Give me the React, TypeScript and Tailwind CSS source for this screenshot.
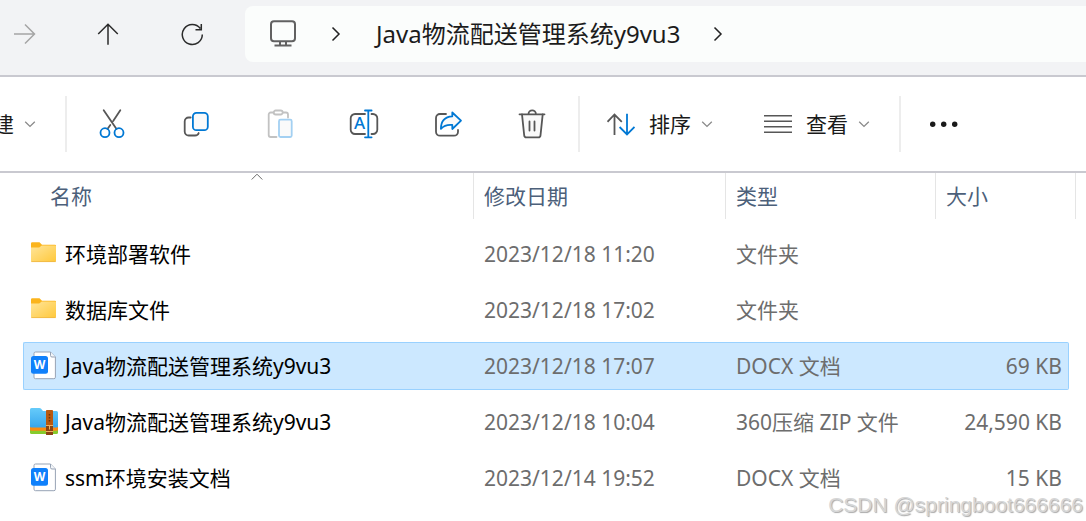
import React from 'react';

type FileKind = 'folder' | 'docx' | 'zip';

interface FileItem {
  name: string;
  kind: FileKind;
  date: string;
  type: string;
  size?: string;
  selected?: boolean;
}

const FILES: FileItem[] = [
  { name: '环境部署软件', kind: 'folder', date: '2023/12/18 11:20', type: '文件夹' },
  { name: '数据库文件', kind: 'folder', date: '2023/12/18 17:02', type: '文件夹' },
  { name: 'Java物流配送管理系统y9vu3', kind: 'docx', date: '2023/12/18 17:07', type: 'DOCX 文档', size: '69 KB', selected: true },
  { name: 'Java物流配送管理系统y9vu3', kind: 'zip', date: '2023/12/18 10:04', type: '360压缩 ZIP 文件', size: '24,590 KB' },
  { name: 'ssm环境安装文档', kind: 'docx', date: '2023/12/14 19:52', type: 'DOCX 文档', size: '15 KB' },
];

const FolderIcon = () => (
  <svg width="30" height="30" viewBox="0 0 30 30" className="shrink-0">
    <defs>
      <linearGradient id="folder-front" x1="0" y1="0" x2="1" y2="1">
        <stop offset="0" stopColor="#ffe59a" />
        <stop offset="1" stopColor="#ffc83a" />
      </linearGradient>
    </defs>
    <path d="M2 4.5a1.3 1.3 0 0 1 1.3-1.3H10.5l2.500 2.500H26a1 1 0 0 1 1 1V12H2z" fill="#fbb41c" />
    <path d="M2 8.600h8.200l2.600-2H26a1 1 0 0 1 1 1V21.700a1.300 1.300 0 0 1-1.300 1.300H3.300A1.300 1.300 0 0 1 2 21.700z" fill="url(#folder-front)" />
    <path d="M2.300 22.600H26.700" stroke="#eeb544" strokeWidth="0.8" />
  </svg>
);

const DocxIcon = () => (
  <svg width="30" height="30" viewBox="0 0 30 30" className="shrink-0">
    <path d="M6.500 1H21.500L26.400 6V26.200a1.500 1.500 0 0 1-1.500 1.500H6.500A1.500 1.500 0 0 1 5 26.200V2.500A1.500 1.500 0 0 1 6.500 1z" fill="#fff" stroke="#97a3b5" />
    <path d="M21.500 1V4.500a1.500 1.500 0 0 0 1.500 1.500H26.400" fill="#f4f6f9" stroke="#97a3b5" />
    <rect x="2" y="5" width="17" height="17.700" rx="2.500" fill="#0f80fb" />
    <text x="10.500" y="18" textAnchor="middle" fontSize="12" fontWeight="700" fill="#fff">W</text>
  </svg>
);

const ZipIcon = () => (
  <svg width="30" height="30" viewBox="0 0 30 30" className="shrink-0">
    <defs>
      <linearGradient id="zip-front" x1="0" y1="0" x2="0" y2="1">
        <stop offset="0" stopColor="#66cbfa" />
        <stop offset="1" stopColor="#3aa8ee" />
      </linearGradient>
    </defs>
    <rect x="1" y="14" width="28" height="13" rx="1.500" fill="#86cb2c" />
    <rect x="1" y="11" width="28" height="12.800" rx="1.500" fill="#fb8b13" />
    <path d="M1 2.500A1.500 1.500 0 0 1 2.500 1H10.500a2 2 0 0 1 1.400.6L14 4H27.500A1.500 1.500 0 0 1 29 5.500V20H1z" fill="url(#zip-front)" />
    <path d="M1 18.500h28v.500a1.500 1.500 0 0 1-1.500 1.500h-25A1.500 1.500 0 0 1 1 19z" fill="#3aa8ee" />
    <rect x="17" y="3" width="7" height="25" rx="0.800" fill="#b9590f" />
    <path d="M20.500 7v9" stroke="#6f3407" strokeWidth="1.500" strokeDasharray="1.500 1.500" />
    <rect x="17" y="18" width="7" height="10" rx="0.800" fill="#8b4410" />
    <path d="M16.800 18.500h7.400M16.800 24.500h7.400M20.500 18.500v4" stroke="#f0b060" strokeWidth="1" />
  </svg>
);

const FILE_ICONS: Record<FileKind, React.FC> = {
  folder: FolderIcon,
  docx: DocxIcon,
  zip: ZipIcon,
};

const ChevronDown = () => (
  <svg width="12" height="12" viewBox="0 0 12 12" fill="none" stroke="#8a8a8a" strokeWidth="1.300">
    <path d="M1.200 3.800L6 8.400l4.800-4.600" />
  </svg>
);

const ChevronRight = () => (
  <svg width="12" height="16" viewBox="0 0 12 16" fill="none" stroke="#222" strokeWidth="1.500">
    <path d="M2.500 1.500L9 8l-6.500 6.500" />
  </svg>
);

const NavButton: React.FC<{ label: string; disabled?: boolean; children: React.ReactNode }> = ({ label, disabled, children }) => (
  <button type="button" aria-label={label} disabled={disabled} className="flex w-[84px] shrink-0 items-center justify-center">
    {children}
  </button>
);

const ToolButton: React.FC<{ label: string; disabled?: boolean; children: React.ReactNode }> = ({ label, disabled, children }) => (
  <button type="button" aria-label={label} disabled={disabled} className="flex h-14 w-[84px] shrink-0 items-center justify-center">
    <svg width="32" height="32" viewBox="0 0 32 32" fill="none" stroke="#575757" strokeWidth="1.800" strokeLinecap="round" strokeLinejoin="round">
      {children}
    </svg>
  </button>
);

const Divider = () => <div className="h-14 w-0.5 shrink-0 bg-[#ededed]" />;

const App: React.FC = () => {
  return (
    <div className="relative min-h-screen overflow-hidden bg-white font-['Noto_Sans','Noto_Sans_CJK_SC',sans-serif] text-[21px] leading-7">
      {/* Navigation bar */}
      <nav className="flex border-b-2 border-[#c9c9d0] bg-[#f2f3f5] pt-1.5 pb-[13px]">
        <div className="-ml-[18px] flex">
          <NavButton label="前进" disabled>
            <svg width="24" height="24" viewBox="0 0 24 24" fill="none" stroke="#a5a5a5" strokeWidth="1.500">
              <path d="M2 12H22.500M13 2.500L22.500 12L13 21.500" />
            </svg>
          </NavButton>
          <NavButton label="上移">
            <svg width="24" height="24" viewBox="0 0 24 24" fill="none" stroke="#2b2b2b" strokeWidth="1.500">
              <path d="M12 22.800V2.500M2.200 12L12 2.300L21.800 12" />
            </svg>
          </NavButton>
          <NavButton label="刷新">
            <svg width="24" height="24" viewBox="0 0 24 24" fill="none" stroke="#2b2b2b" strokeWidth="1.500">
              <path d="M22.300 12.500A10 10 0 1 1 20.300 6.500M21.300 2v5.700H15.500" />
            </svg>
          </NavButton>
        </div>
        <div className="ml-[11px] flex h-14 flex-1 items-center rounded-l-lg bg-[#fbfdfc] pl-6">
          <svg width="28" height="28" viewBox="0 0 28 28" fill="none" stroke="#616161" strokeWidth="2" className="shrink-0">
            <rect x="2" y="1.300" width="24" height="20" rx="3" />
            <path d="M11 21.500v4M17 21.500v4M5.500 25.500h17" />
          </svg>
          <button type="button" aria-label="展开" className="ml-[33px]"><ChevronRight /></button>
          <a href="#" className="ml-[34px] text-2xl whitespace-nowrap text-[#1c1c1c]">Java物流配送管理系统y9vu3</a>
          <button type="button" aria-label="展开子文件夹" className="ml-8"><ChevronRight /></button>
        </div>
      </nav>

      {/* Command bar */}
      <div className="flex items-center border-b-2 border-[#c9c9d0] py-[19px] text-[#1a1a1a]">
        <button type="button" className="-ml-[7px] flex w-[72px] shrink-0 items-center gap-2.5">
          建
          <ChevronDown />
        </button>
        <Divider />
        <div className="mx-[3px] flex">
          <ToolButton label="剪切">
            <path d="M7.700 2.300L20.500 21M24.300 2.300L17.200 13M14.300 17L11.500 21" />
            <circle cx="9" cy="24.700" r="4.500" stroke="#0078d4" />
            <circle cx="23" cy="24.700" r="4.500" stroke="#0078d4" />
          </ToolButton>
          <ToolButton label="复制">
            <path d="M10.700 9.500H8.700a4 4 0 0 0-4 4V23.500a4 4 0 0 0 4 4H15Q18 27.500 18.700 25" />
            <rect x="12.900" y="4.800" width="14.900" height="17.400" rx="3.500" fill="#fafafa" stroke="#0078d4" />
          </ToolButton>
          <ToolButton label="粘贴" disabled>
            <path d="M9.500 4.500H6.700a2 2 0 0 0-2 2V27a2 2 0 0 0 2 2H12.500M18.900 4.500H22a2 2 0 0 1 2 2V9.500" stroke="#c2c2c2" />
            <rect x="9.700" y="2.500" width="9" height="4" rx="2" stroke="#c2c2c2" />
            <rect x="15" y="11.700" width="12.700" height="17.300" rx="1.500" fill="#fafafa" stroke="#a3d0f2" />
          </ToolButton>
          <ToolButton label="重命名">
            <path d="M17 6H7a4.300 4.300 0 0 0-4.300 4.300V21.700A4.300 4.300 0 0 0 7 26H17M23.500 6H25a4.300 4.300 0 0 1 4.300 4.300V21.700A4.300 4.300 0 0 1 25 26H23.500" />
            <path d="M20.300 2.500V29.300M17 2.500h6.600M17 29.300h6.600" stroke="#0078d4" />
            <text x="11.500" y="21" textAnchor="middle" fontSize="17" fill="#0078d4" stroke="none" fontWeight="500">A</text>
          </ToolButton>
          <ToolButton label="共享">
            <path d="M14 6H8a4 4 0 0 0-4 4V23.700a4 4 0 0 0 4 4H22a4 4 0 0 0 4-4V22" />
            <path d="M20.300 4.500L29 12.700L20.300 21V17C15 16.500 11.500 18 8.900 20.900C8.900 13.500 12.500 8.700 20.300 8.300z" fill="#fafafa" stroke="#0078d4" />
          </ToolButton>
          <ToolButton label="删除">
            <path d="M6 6.300L8.200 27.300a2.200 2.200 0 0 0 2.200 2H22.300a2.200 2.200 0 0 0 2.200-2L26.700 6.300" fill="#fafafa" />
            <path d="M3.500 6.300H28.500M12.500 6a3.700 3.700 0 0 1 7.400 0M13.500 13.500V22.500M18.500 13.500V22.500" />
          </ToolButton>
        </div>
        <div className="ml-px"><Divider /></div>
        <button type="button" className="ml-[27px] flex shrink-0 items-center">
          <svg width="28" height="28" viewBox="0 0 28 28" fill="none" strokeWidth="1.800">
            <path d="M7.500 25V4.500M.5 11.800L7.500 4.500L14.800 11.800" stroke="#575757" />
            <path d="M20 3.800V24.500M12.600 17L20 24.500L27.500 17" stroke="#0078d4" />
          </svg>
          <span className="ml-3.5 mr-2.5">排序</span>
          <ChevronDown />
        </button>
        <button type="button" className="ml-[51px] flex shrink-0 items-center">
          <svg width="28" height="28" viewBox="0 0 28 28" fill="none" stroke="#575757" strokeWidth="1.600">
            <path d="M0 5.700H28M0 11.200H28M0 16.700H28M0 22.200H28" />
          </svg>
          <span className="ml-3.5 mr-2.5">查看</span>
          <ChevronDown />
        </button>
        <div className="ml-[29px]"><Divider /></div>
        <button type="button" aria-label="查看更多" className="ml-7 shrink-0">
          <svg width="30" height="8" viewBox="0 0 30 8" fill="#1a1a1a">
            <circle cx="3.700" cy="4.300" r="2.700" />
            <circle cx="14.700" cy="4.300" r="2.700" />
            <circle cx="25.700" cy="4.300" r="2.700" />
          </svg>
        </button>
      </div>

      {/* File list */}
      <div className="pr-2.5 pl-[23px]">
        <table className="w-full table-fixed border-collapse text-left text-[#6d6d6d]">
          <colgroup>
            <col />
            <col className="w-[252px]" />
            <col className="w-[210px]" />
            <col className="w-[140px]" />
          </colgroup>
          <thead className="text-[#4c607a]">
            <tr className="h-[53px] align-top">
              <th className="p-0 font-normal">
                <div className="relative ml-[17px] flex h-[46px] items-center border-r border-[#e5e5e5] pl-2.5">
                  <svg width="12" height="8" viewBox="0 0 12 8" fill="none" stroke="#6b6b6b" className="absolute top-0 left-1/2 -translate-x-1/2">
                    <path d="M.700 6.500L6 1.200l5.300 5.300" />
                  </svg>
                  名称
                </div>
              </th>
              <th className="p-0 font-normal">
                <div className="flex h-[46px] items-center border-r border-[#e5e5e5] pl-2.5">修改日期</div>
              </th>
              <th className="p-0 font-normal">
                <div className="flex h-[46px] items-center border-r border-[#e5e5e5] pl-2.5">类型</div>
              </th>
              <th className="p-0 font-normal">
                <div className="flex h-[46px] items-center border-r border-[#e5e5e5] pl-2.5">大小</div>
              </th>
            </tr>
          </thead>
          <tbody>
            {FILES.map((file, i) => {
              const Icon = FILE_ICONS[file.kind];
              const cell = file.selected
                ? 'flex h-12 items-center border-y border-[#99d1ff] bg-[#cce8ff]'
                : 'flex h-12 items-center border-y border-transparent';
              return (
                <tr key={i}>
                  <td className="p-0 py-1">
                    <div className={`${cell} gap-1.5 rounded-l-xs border-l pl-[5px] text-black`}>
                      <Icon />
                      <span className="whitespace-nowrap">{file.name}</span>
                    </div>
                  </td>
                  <td className="p-0 py-1">
                    <div className={`${cell} pl-2.5`}>{file.date}</div>
                  </td>
                  <td className="p-0 py-1">
                    <div className={`${cell} pl-2.5 whitespace-nowrap`}>{file.type}</div>
                  </td>
                  <td className="p-0 py-1 pr-[7px]">
                    <div className={`${cell} justify-end rounded-r-xs border-r pr-1.5`}>{file.size}</div>
                  </td>
                </tr>
              );
            })}
          </tbody>
        </table>
      </div>

      {/* Watermark */}
      <div className="pointer-events-none absolute right-[3px] bottom-1 font-['Liberation_Sans',sans-serif] leading-6 text-[#d6d6d6] [text-shadow:1px_1px_1px_#a8a8a8]">
        CSDN @springboot666666
      </div>
    </div>
  );
};

export default App;
